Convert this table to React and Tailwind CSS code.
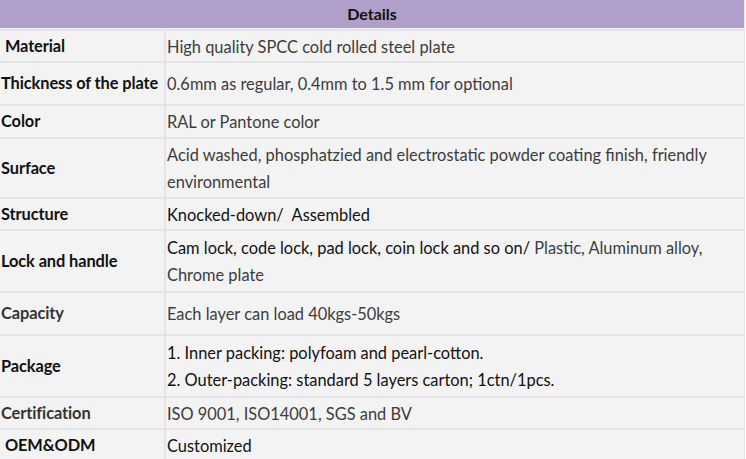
export default function App() {
  const rows = [
    { label: " Material", h: "h-[30px]", lc: "text-[#111]", value: ["High quality SPCC cold rolled steel plate"] },
    { label: "Thickness of the plate", h: "h-[41px]", lc: "text-[#111]", value: ["0.6mm as regular, 0.4mm to 1.5 mm for optional"] },
    { label: "Color", h: "h-[31px]", lc: "text-[#111]", value: ["RAL or Pantone color"] },
    { label: "Surface", h: "h-[58px]", lc: "text-[#111]", value: ["Acid washed, phosphatzied and electrostatic powder coating finish, friendly", "environmental"] },
    { label: "Structure", h: "h-[30px]", lc: "text-[#111]", value: [<span key="s" className="text-[#111]">Knocked-down/&nbsp; Assembled</span>] },
    { label: "Lock and handle", h: "h-[60px]", lc: "text-[#111]", value: [<span key="l"><span className="text-[#111]">Cam lock, code lock, pad lock, coin lock and so on/</span> Plastic, Aluminum alloy,</span>, "Chrome plate"] },
    { label: "Capacity", h: "h-[41px]", lc: "text-[#333]", value: ["Each layer can load 40kgs-50kgs"] },
    { label: "Package", h: "h-[60px]", lc: "text-[#111]", value: [<span key="p" className="text-[#111]">1. Inner packing: polyfoam and pearl-cotton.</span>, <span key="q" className="text-[#111]">2. Outer-packing: standard 5 layers carton; 1ctn/1pcs.</span>] },
    { label: "Certification", h: "h-[30px]", lc: "text-[#333]", value: ["ISO 9001, ISO14001, SGS and BV"] },
    { label: " OEM&ODM", h: "h-[30px]", lc: "text-[#111]", value: [<span key="o" className="text-[#111]">Customized</span>] },
  ];
  return (
    <div className="w-[746px] h-[459px] overflow-hidden bg-white font-['Lato','Open_Sans',sans-serif] text-[16.4px]">
      <div className="w-[745px] bg-[#e4e4e6] pr-[1px] grid grid-cols-[164px_1fr] gap-x-[2px] gap-y-[2px]">
        <div className="col-span-2 h-[29px] bg-[#b09fca] flex items-center justify-center font-bold text-[#111] text-[16px] border-b border-[#f0eef4]">
          Details
        </div>
        {rows.map((r, i) => (
          <div key={i} className="contents">
            <div className={`${r.h} bg-[#f3f3f4] flex items-center pl-[1px] font-bold whitespace-pre tracking-[-0.1px] ${r.lc}`}>
              {r.label}
            </div>
            <div className={`${r.h} bg-[#f3f3f4] flex flex-col justify-center pl-[1px] text-[#3c3c3c]`}>
              {r.value.map((v, j) => (
                <div key={j} className="leading-[27px] whitespace-nowrap">{v}</div>
              ))}
            </div>
          </div>
        ))}
      </div>
    </div>
  );
}
